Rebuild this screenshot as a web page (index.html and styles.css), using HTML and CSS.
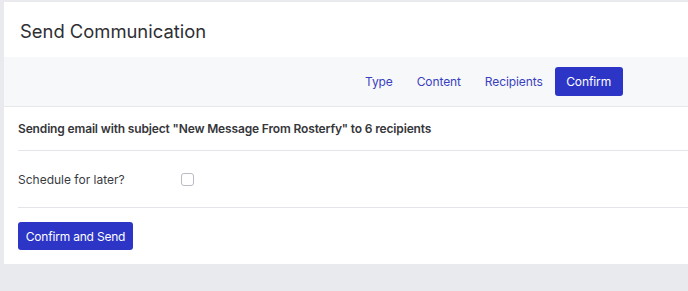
FILE: index.html
```html
<!DOCTYPE html>
<html lang="en">
<head>
    <meta charset="UTF-8">
    <meta name="viewport" content="width=device-width, initial-scale=1.0">
    <title>Send Communication</title>
    <link rel="stylesheet" href="styles.css">
</head>
<body>

    <!-- card -->
    <div class="card">
        <div class="card-header">
            <h1>Send Communication</h1>
        </div>

        <!-- step tabs -->
        <div class="steps">
            <a class="step">Type</a>
            <a class="step">Content</a>
            <a class="step">Recipients</a>
            <a class="step active">Confirm</a>
        </div>

        <div class="card-body">
            <div class="row summary">
                Sending email with subject "New Message From Rosterfy" to 6 recipients
            </div>
            <div class="row schedule">
                <label for="later">Schedule for later?</label>
                <input id="later" type="checkbox" class="check">
            </div>
            <div class="row actions">
                <button class="btn-primary">Confirm and Send</button>
            </div>
        </div>
    </div>

</body>
</html>
```

FILE: styles.css
```css
body {
    margin: 0;
    padding: 2px 0 0 4px;
    height: 100vh;
    box-sizing: border-box;
    overflow: hidden;
    background-color: #e9eaee;
    font-family: Inter, "Noto Sans", Arial, sans-serif;
    color: #333;
}
.card {
    width: 684px;
    background-color: #fff;
}
.card-header {
    height: 55px;
    display: flex;
    align-items: center;
    padding-left: 16px;
}
.card-header h1 {
    margin: 2px 0 0;
    font-size: 18.4px;
    font-weight: 400;
    color: #2f2f33;
}
.steps {
    height: 49px;
    display: flex;
    align-items: center;
    padding-left: 349px;
    background-color: #f7f8fa;
    border-bottom: 1px solid #e7e8ec;
}
.step {
    display: flex;
    align-items: center;
    height: 29px;
    padding: 0 12px;
    font-size: 12px;
    letter-spacing: -0.1px;
    color: #3a3fbf;
    border-radius: 3px;
}
.step.active {
    width: 68px;
    box-sizing: border-box;
    justify-content: center;
    padding: 0;
    background-color: #2c35c6;
    color: #fff;
}
.card-body {
    padding: 0 0 0 14px;
}
.row {
    border-bottom: 1px solid #e4e5e9;
    display: flex;
    align-items: center;
}
.row:last-child { border-bottom: none; }
.summary {
    height: 43px;
    font-size: 12px;
    font-weight: 600;
    letter-spacing: -0.15px;
    color: #35363a;
}
.schedule {
    height: 56px;
    font-size: 12px;
    color: #3a3b3f;
}
.schedule label { width: 163px; }
.check {
    appearance: none;
    margin: 0;
    width: 13px;
    height: 13px;
    border: 1px solid #b9bcc3;
    border-radius: 3px;
    background-color: #fff;
}
.actions {
    height: 56px;
}
.btn-primary {
    width: 115px;
    height: 28px;
    padding: 0;
    border: none;
    border-radius: 3px;
    background-color: #2c35c6;
    color: #fff;
    font-family: inherit;
    font-size: 12px;
    letter-spacing: -0.2px;
}
```
